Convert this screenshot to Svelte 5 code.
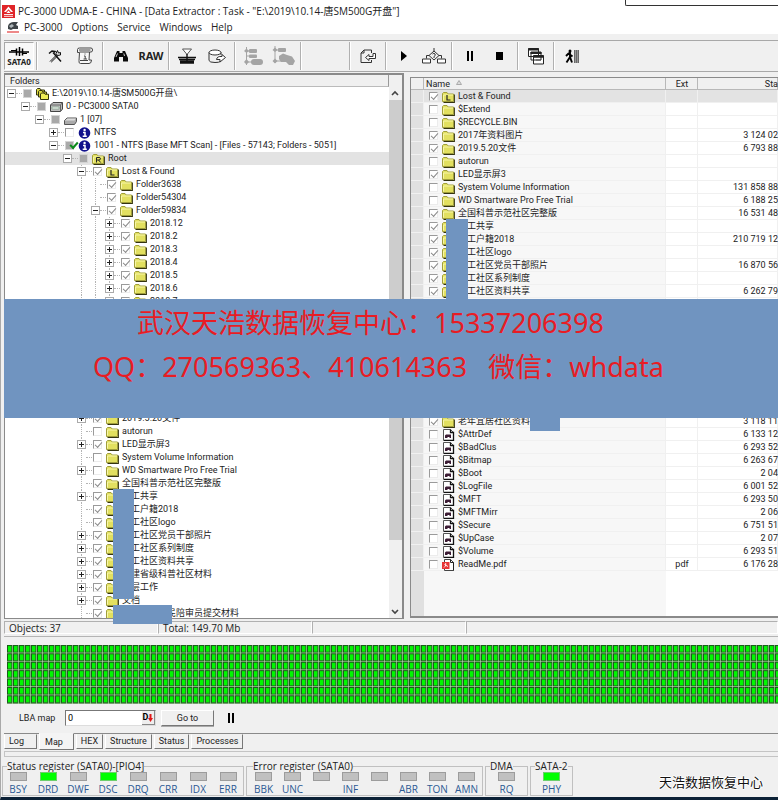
<script lang="ts">
  type Check = 'on' | 'off' | 'part';
  interface Node {
    level: number;
    label: string;
    check: Check;
    icon: string;
    exp?: '+' | '-';
    selected?: boolean;
    tick?: boolean;
  }
  interface Item {
    name: string;
    check?: Check;
    icon?: string;
    ext?: string;
    start?: string;
    selected?: boolean;
  }

  const menu = ['PC-3000', 'Options', 'Service', 'Windows', 'Help'];

  const folder = (level: number, label: string, exp?: '+' | '-', check: Check = 'on'): Node => ({
    level,
    label,
    check,
    icon: 'folder',
    exp,
  });

  const blank = (level: number): Node => ({ level, label: '', check: 'off', icon: '' });

  const tree: Node[] = [
    { level: 0, label: 'E:\\2019\\10.14-唐SM500G开盘\\', check: 'part', icon: 'stack', exp: '-' },
    { level: 1, label: '0 - PC3000 SATA0', check: 'part', icon: 'disk', exp: '-' },
    { level: 2, label: '1 [07]', check: 'part', icon: 'drive', exp: '-' },
    { level: 3, label: 'NTFS', check: 'off', icon: 'info', exp: '+' },
    { level: 3, label: '1001 - NTFS [Base MFT Scan] - [Files - 57143; Folders - 5051]', check: 'part', icon: 'info', exp: '-', tick: true },
    { level: 4, label: 'Root', check: 'part', icon: 'R', exp: '-', selected: true },
    { level: 5, label: 'Lost & Found', check: 'on', icon: 'L', exp: '-' },
    folder(6, 'Folder3638'),
    folder(6, 'Folder54304'),
    folder(6, 'Folder59834', '-'),
    folder(7, '2018.12', '+'),
    folder(7, '2018.2', '+'),
    folder(7, '2018.3', '+'),
    folder(7, '2018.4', '+'),
    folder(7, '2018.5', '+'),
    folder(7, '2018.6', '+'),
    folder(7, '2018.7', '+'),
    ...Array.from({ length: 8 }, () => blank(5)),
    folder(5, '2019.5.20文件', '+'),
    folder(5, 'autorun', undefined, 'off'),
    folder(5, 'LED显示屏3', '+'),
    folder(5, 'System Volume Information', undefined, 'off'),
    folder(5, 'WD Smartware Pro Free Trial', '+', 'off'),
    folder(5, '全国科普示范社区完整版'),
    folder(5, '\u3000工共享', '+'),
    folder(5, '\u3000工户籍2018'),
    folder(5, '\u3000工社区logo'),
    folder(5, '\u3000工社区党员干部照片', '+'),
    folder(5, '\u3000工社区系列制度', '+'),
    folder(5, '\u3000工社区资料共享', '+'),
    folder(5, '\u3000建省级科普社区材料', '+'),
    folder(5, '\u3000层工作', '+'),
    folder(5, '文档', '+'),
    folder(5, '\u3000\u3000\u3000\u3000\u3000民陪审员提交材料'),
  ];

  const file = (name: string, start: string): Item => ({ name, start, check: 'off', icon: 'sys' });

  const items: Item[] = [
    { name: 'Lost & Found', check: 'on', icon: 'L', selected: true },
    { name: '$Extend', check: 'off', icon: 'folder' },
    { name: '$RECYCLE.BIN', check: 'off', icon: 'folder' },
    { name: '2017年资料图片', check: 'on', icon: 'folder', start: '3 124 02' },
    { name: '2019.5.20文件', check: 'on', icon: 'folder', start: '6 793 88' },
    { name: 'autorun', check: 'off', icon: 'folder' },
    { name: 'LED显示屏3', check: 'on', icon: 'folder' },
    { name: 'System Volume Information', check: 'off', icon: 'folder', start: '131 858 88' },
    { name: 'WD Smartware Pro Free Trial', check: 'off', icon: 'folder', start: '6 188 25' },
    { name: '全国科普示范社区完整版', check: 'on', icon: 'folder', start: '16 531 48' },
    { name: '\u3000工共享', check: 'on', icon: 'folder' },
    { name: '\u3000工户籍2018', check: 'on', icon: 'folder', start: '210 719 12' },
    { name: '\u3000工社区logo', check: 'on', icon: 'folder' },
    { name: '\u3000工社区党员干部照片', check: 'on', icon: 'folder', start: '16 870 56' },
    { name: '\u3000工社区系列制度', check: 'on', icon: 'folder' },
    { name: '\u3000工社区资料共享', check: 'on', icon: 'folder', start: '6 262 79' },
    ...Array.from({ length: 9 }, () => ({ name: '' })),
    { name: '老年宜居社区资料', check: 'on', icon: 'folder', start: '3 118 11' },
    file('$AttrDef', '6 133 12'),
    file('$BadClus', '6 293 52'),
    file('$Bitmap', '6 263 67'),
    file('$Boot', '2 04'),
    file('$LogFile', '6 001 52'),
    file('$MFT', '6 293 50'),
    file('$MFTMirr', '2 06'),
    file('$Secure', '6 751 51'),
    file('$UpCase', '2 07'),
    file('$Volume', '6 293 51'),
    { name: 'ReadMe.pdf', check: 'off', icon: 'pdf', ext: 'pdf', start: '6 176 28' },
  ];

  const tabs = ['Log', 'Map', 'HEX', 'Structure', 'Status', 'Processes'];
  let activeTab = $state('Map');
  let lba = $state('0');

  const registers = [
    {
      title: 'Status register (SATA0)-[PIO4]',
      kind: 'state',
      bits: ['BSY', 'DRD', 'DWF', 'DSC', 'DRQ', 'CRR', 'IDX', 'ERR'],
    },
    { title: 'Error register (SATA0)', kind: 'error', bits: ['BBK', 'UNC', '', 'INF', '', 'ABR', 'TON', 'AMN'] },
    { title: 'DMA', kind: 'single', bits: ['RQ'] },
    { title: 'SATA-2', kind: 'single', bits: ['PHY'] },
  ];
  const lit = new Set(['DRD', 'DSC', 'PHY']);
</script>

{#snippet nodeIcon(kind: string)}
  <svg class="icon" viewBox="0 0 13 12" aria-hidden="true">
    {#if kind === 'folder' || kind === 'L' || kind === 'R'}
      <path d="M1.500 11.500H12.300V3.500" fill="none" stroke="#33330f" stroke-width="1.200" />
      <path d="M.5 10.500V2.500L1.500 1.500H5L6.200 3H11.500V10.500Z" fill="#e2e060" stroke="#a09e3c" />
      <path d="M1.500 9.500V4H11" fill="none" stroke="#f7f6a8" />
      {#if kind === 'L'}
        <path d="M5 4V9H8.500" fill="none" stroke="#222" stroke-width="1.200" />
      {:else if kind === 'R'}
        <path d="M4.500 9.500V4.500H7Q8.500 4.500 8.500 5.700T7 7H4.500M6.500 7L8.700 9.500" fill="none" stroke="#222" />
      {/if}
    {:else if kind === 'stack'}
      <path d="M.5 7V1.500L1.500.5H4L5 2H8.500V7Z" fill="#d8d640" stroke="#33330c" />
      <path d="M2.500 9V3.500L3.500 2.500H6L7 4H10.500V9Z" fill="#d8d640" stroke="#33330c" />
      <path d="M4.500 11.500V6L5.500 5H8L9 6.200H12.500V11.500Z" fill="#efed55" stroke="#33330c" />
    {:else if kind === 'disk'}
      <path d="M.5 4L3 1.500H12.500V8L10.500 10.500H.5Z" fill="#bdbdbd" stroke="#444" />
      <path d="M.5 4H10.500V10.500M10.500 4L12.500 1.500" fill="none" stroke="#666" />
      <path d="M2 6H9V8H2Z" fill="#eee" stroke="#6f9a7a" stroke-width=".6" />
    {:else if kind === 'drive'}
      <path d="M.5 6.500L3 4H12.500V7.500L10.500 10.500H.5Z" fill="#aaa" stroke="#555" />
      <path d="M1 6.500H10.500L12 4.500H3.200Z" fill="#ddd" />
    {:else if kind === 'info'}
      <circle cx="6.500" cy="6" r="5.800" fill="#11118c" />
      <path d="M5 5.500H7V9M4.700 9.300H8.800" fill="none" stroke="#fff" stroke-width="1.500" />
      <circle cx="6.600" cy="3" r="1.200" fill="#fff" />
    {:else if kind === 'sys'}
      <path d="M1.500.5H8.500L11.500 3.500V11.500H1.500Z" fill="#fff" stroke="#555" />
      <path d="M8.500.5V3.500H11.500V11.500H2" fill="none" stroke="#111" stroke-width="1.300" />
      <path d="M3 9V6.500L4 5.500H9V9H7.500V8H5.500V9Z" fill="#3c1c34" />
    {:else if kind === 'pdf'}
      <path d="M2.500.5H8.500L11.500 3.500V11.500H2.500Z" fill="#fff" stroke="#444" />
      <path d="M8.500.5V3.500H11.500V11.500" fill="none" stroke="#222" />
      <rect x="0" y="3" width="7.500" height="7" fill="#e63434" />
      <path d="M2 8.500C4 7 4 5 3.500 4M2.500 5.500L6 7.500" fill="none" stroke="#fff" stroke-width=".9" />
    {/if}
  </svg>
{/snippet}

<div class="window">
  <header class="title">
    <svg class="logo" viewBox="0 0 13 13" aria-hidden="true">
      <rect width="13" height="13" fill="#e02427" />
      <path d="M6.500 1.500L11 7H9L6.500 4.200L4 7H2Z" fill="#fff" />
      <path d="M6.500 5.500L8.500 8H4.500Z" fill="#fff" />
      <path d="M2 9.500H11M2 11.300H11" stroke="#fff" stroke-width=".9" />
    </svg>
    <h1>PC-3000 UDMA-E - CHINA - [Data Extractor : Task - "E:\2019\10.14-唐SM500G开盘"]</h1>
    <div class="popup-edge"></div>
  </header>

  <nav class="menu">
    <svg class="mdi" viewBox="0 0 12 12" aria-hidden="true">
      <path d="M1 5C2 2 4 1 7 1H11L9 4L11 5V8H6L4 9L1 8Z" fill="#3d4347" />
      <path d="M2 5L5 3L7 5L4 7Z" fill="#aeb6ba" />
      <path d="M0 11H12" stroke="#e23a3a" stroke-width="1.200" />
    </svg>
    {#each menu as entry}
      <button type="button">{entry}</button>
    {/each}
  </nav>

  <div class="toolbar">
    <button type="button" class="tool pressed" aria-label="SATA0">
      <svg width="22" height="10" viewBox="0 0 22 10" aria-hidden="true">
        <path d="M1 5H21M8.500 1.500V8.500M11.500 0V9M14.500 1.500V8.500" stroke="#000" stroke-width="1.500" fill="none" />
        <path d="M3 3.500H8M15 6.500H19" stroke="#000" />
      </svg>
      <span class="port">SATA0</span>
    </button>
    <i class="sep"></i>
    <button type="button" class="tool" aria-label="Utilities">
      <svg width="14" height="14" viewBox="0 0 14 14" aria-hidden="true">
        <path d="M2 12.500L9 5.500M3.200 13.200L10 6.500" stroke="#111" fill="none" />
        <path d="M1 4.500L4 2L7 2.500L5.500 4L13 12.500" fill="none" stroke="#111" stroke-width="1.500" />
        <path d="M9.500 6.500L8 4.500L9.500 1.500L10.500 4L12.500 3.500L12.500 6Z" fill="#ddd" stroke="#111" />
      </svg>
    </button>
    <button type="button" class="tool" aria-label="Script">
      <svg width="18" height="18" viewBox="0 0 18 18" aria-hidden="true">
        <path d="M3.500 5.500H1.500V2.500Q1.500 1 3.500 1H15Q16.500 1 16.500 3T15 5H13.500L13 13H15.500Q15.500 16.500 13 16.500H4.500Q2.500 16.500 3 13.500Z" fill="#f7f7f7" stroke="#444" />
        <path d="M3.500 5H13.500M3 3H14.500M4 13.500H12M9 6.500V7.500M8 9H9.200V12M7.500 12H11" stroke="#444" fill="none" />
      </svg>
    </button>
    <i class="sep"></i>
    <button type="button" class="tool" aria-label="Find">
      <svg width="14" height="12" viewBox="0 0 14 12" aria-hidden="true">
        <path d="M3 1H5.500V3H8.500V1H11L14 8V11.500H9V7H5V11.500H0V8Z" fill="#0b0b0b" />
        <path d="M2 7L3.500 3.500M9.800 3.500L10.500 6" stroke="#ccc" />
      </svg>
    </button>
    <button type="button" class="tool raw">RAW</button>
    <i class="sep"></i>
    <button type="button" class="tool" aria-label="Filter">
      <svg width="18" height="17" viewBox="0 0 18 17" aria-hidden="true">
        <path d="M4.500 1H13.500L9 6.500Z" fill="#fff" stroke="#555" />
        <path d="M9 6V15M0 9.500H18M1 11.500H17" stroke="#111" fill="none" stroke-width="1.400" />
        <path d="M2 14H16" stroke="#111" stroke-width="3.500" />
      </svg>
    </button>
    <button type="button" class="tool" aria-label="Extract">
      <svg width="18" height="15" viewBox="0 0 18 15" aria-hidden="true">
        <ellipse cx="7" cy="3.500" rx="6" ry="2.500" fill="#fff" stroke="#333" />
        <path d="M1 3.500V11.500Q1.500 13.500 7 13.500Q11 13.500 12.500 12.500M13 3.500V6" fill="none" stroke="#333" />
        <path d="M8.500 10.500H12V13L17.500 8.500L14 5.500V7.500Q9 7 8.500 10.500Z" fill="#fff" stroke="#333" />
      </svg>
    </button>
    <i class="sep"></i>
    <button type="button" class="tool" aria-label="Map files" disabled>
      <svg width="20" height="19" viewBox="0 0 20 19" aria-hidden="true">
        <path d="M3.500 0V18M3.500 4H8M3.500 9H8M3.500 15H10" stroke="#a4a4a4" fill="none" />
        <path d="M1 4L3.500 1.500L6 4L3.500 6ZM1 15L3.500 12L6 15L3.500 17.500Z" fill="#a4a4a4" />
        <rect x="6" y="2" width="8" height="4" rx="1" fill="#a4a4a4" />
        <rect x="6" y="7.500" width="8" height="3.500" rx="1" fill="#a4a4a4" />
        <rect x="8" y="12" width="12" height="6" rx="3" fill="#a4a4a4" />
      </svg>
    </button>
    <button type="button" class="tool" aria-label="Map folders" disabled>
      <svg width="23" height="20" viewBox="0 0 23 20" aria-hidden="true">
        <path d="M3 0V17M3 4H8M3 15H9" stroke="#a4a4a4" fill="none" />
        <path d="M.5 4L3 1.500L5.500 4L3 6ZM.5 15L3 12.500L5.500 15L3 17.500Z" fill="#a4a4a4" />
        <rect x="6" y="2" width="8" height="4" rx="1" fill="#a4a4a4" />
        <path d="M7 10L11 7.500L15 9L20 10.500L23 15L21 19H17L14 16L9 16L7 13Z" fill="#a4a4a4" />
      </svg>
    </button>
    <i class="sep"></i>
    <span class="space"></span>
    <i class="sep"></i>
    <button type="button" class="tool" aria-label="Export">
      <svg width="17" height="15" viewBox="0 0 17 15" aria-hidden="true">
        <path d="M11.500 4V1H4L1 4V13.500H11.500V11M4 1V4H1" fill="none" stroke="#333" />
        <path d="M5.500 8.500L9 5.500V7.500H13V4.500H15.500V9.500H9V11.500Z" fill="#fff" stroke="#333" />
      </svg>
    </button>
    <i class="sep"></i>
    <button type="button" class="tool" aria-label="Run">
      <svg width="6" height="10" viewBox="0 0 6 10" aria-hidden="true"><path d="M0 0L6 5L0 10Z" /></svg>
    </button>
    <button type="button" class="tool" aria-label="Condition">
      <svg width="24" height="17" viewBox="0 0 24 17" aria-hidden="true">
        <path d="M12 0V3M12 3L17 7.500L12 12L7 7.500ZM7 7.500H4.500V10.500M17 7.500H19.500V10.500" fill="none" stroke="#333" />
        <path d="M.5 11H8.500V15H.5ZM15.500 11H23.500V15H15.500Z" fill="#fff" stroke="#333" />
        <path d="M10.500 6Q12 4.500 13 6T12 8.500V10" fill="none" stroke="#333" />
      </svg>
    </button>
    <i class="sep"></i>
    <button type="button" class="tool" aria-label="Pause">
      <svg width="7" height="10" viewBox="0 0 7 10" aria-hidden="true"><path d="M0 0H2V10H0ZM4 0H6V10H4Z" /></svg>
    </button>
    <button type="button" class="tool" aria-label="Stop">
      <svg width="8" height="8" viewBox="0 0 8 8" aria-hidden="true"><path d="M0 0H7V8H0Z" /></svg>
    </button>
    <i class="sep"></i>
    <button type="button" class="tool" aria-label="Windows">
      <svg width="16" height="17" viewBox="0 0 16 17" aria-hidden="true">
        <path d="M.5.5H10.500V8.500H.5ZM3 4H13V12H3ZM5.500 7.500H15.500V16H5.500Z" fill="#fff" stroke="#222" />
        <path d="M0 1.500H11M2.500 5H13.500M5 8.800H16" stroke="#222" stroke-width="2" />
        <path d="M8 12H13" stroke="#555" />
      </svg>
    </button>
    <i class="sep"></i>
    <button type="button" class="tool" aria-label="Exit">
      <svg width="15" height="15" viewBox="0 0 15 15" aria-hidden="true">
        <rect x="9" y="1" width="5" height="13" fill="#999" />
        <path d="M9.500 1V14M11.500 1V14M13.500 1V14" stroke="#555" stroke-width=".7" />
        <circle cx="5" cy="2" r="1.500" />
        <path d="M5 3V8L7 13.500M5 8L1.500 13.500M1 7L3.500 4.500L7.500 7.500" fill="none" stroke="#000" stroke-width="1.900" />
      </svg>
    </button>
  </div>

  <main class="work">
    <section class="folders">
      <h2>Folders</h2>
      <div class="tree-wrap">
        <ul class="tree">
          {#each tree as node}
            <li class:selected={node.selected}>
              {#each { length: node.level } as _, i}
                <span class="guide" class:line={i >= 5}></span>
              {/each}
              <span class="guide own" class:line={node.level >= 5}>
                {#if node.exp}
                  <button type="button" class="exp" aria-label="Toggle {node.label}">
                    <svg width="7" height="7" viewBox="0 0 7 7" aria-hidden="true">
                      <path d={node.exp === '+' ? 'M1 3.5H6M3.5 1V6' : 'M1 3.5H6'} stroke="#222" />
                    </svg>
                  </button>
                {/if}
              </span>
              {#if node.icon}
                <label>
                  <input type="checkbox" class={node.check} class:tick={node.tick} checked={node.check === 'on'} />
                  {@render nodeIcon(node.icon)}
                  <span>{node.label}</span>
                </label>
              {/if}
            </li>
          {/each}
        </ul>
        <div class="scroll" aria-hidden="true">
          <svg width="12" height="13" viewBox="0 0 12 13"><path d="M3 8L6 5L9 8" fill="none" stroke="#444" stroke-width="1.600" /></svg>
          <span class="thumb"></span>
          <svg width="12" height="13" viewBox="0 0 12 13"><path d="M3 5L6 8L9 5" fill="none" stroke="#444" stroke-width="1.600" /></svg>
        </div>
      </div>
      <i class="mask tall"></i>
      <i class="mask wide"></i>
    </section>

    <section class="files">
      <table>
        <colgroup><col class="c-mark" /><col class="c-name" /><col class="c-ext" /><col /></colgroup>
        <thead>
          <tr>
            <th></th>
            <th>Name <svg class="sort" width="6" height="5" viewBox="0 0 6 5" aria-hidden="true"><path d="M3 .5L5.500 4.500H.5Z" fill="#ddd" stroke="#aaa" /></svg></th>
            <th class="mid">Ext</th>
            <th class="num">Sta</th>
          </tr>
        </thead>
        <tbody>
          {#each items as item}
            <tr class:selected={item.selected}>
              <td></td>
              <td class="name">
                {#if item.icon}
                  <label>
                    <input type="checkbox" class={item.check} checked={item.check === 'on'} />
                    {@render nodeIcon(item.icon)}
                    <span>{item.name}</span>
                  </label>
                {/if}
              </td>
              <td class="mid">{item.ext ?? ''}</td>
              <td class="num">{item.start ?? ''}</td>
            </tr>
          {/each}
        </tbody>
      </table>
      <i class="mask names"></i>
      <i class="mask tail"></i>
    </section>

    <div class="banner">
      <p>武汉天浩数据恢复中心：15337206398</p>
      <p>QQ：270569363、410614363 &nbsp; 微信：whdata</p>
    </div>
  </main>

  <div class="status">
    <span>Objects: 37</span>
    <span>Total: 149.70 Mb</span>
    <span></span>
    <span></span>
  </div>

  <section class="map">
    <svg class="cells" aria-label="LBA map">
      <defs>
        <pattern id="cell" width="6" height="8.4" patternUnits="userSpaceOnUse">
          <rect width="6" height="8.4" fill="#c4dcbc" />
          <rect x="0.5" y="0.5" width="4.4" height="6.8" fill="#00f800" stroke="#1a5c1a" />
        </pattern>
      </defs>
      <rect width="100%" height="59" fill="url(#cell)" />
    </svg>
    <div class="goto">
      <label for="lba">LBA map</label>
      <div class="field">
        <input id="lba" type="text" bind:value={lba} />
        <button type="button" class="radix" aria-label="Decimal">
          <b>D</b>
          <svg width="5" height="8" viewBox="0 0 5 8" aria-hidden="true"><path d="M1.500 0H3.500V4H5L2.500 8L0 4H1.500Z" fill="#e01818" /></svg>
        </button>
      </div>
      <button type="button" class="go">Go to</button>
      <button type="button" class="hold" aria-label="Pause map">
        <svg width="7" height="10" viewBox="0 0 7 10" aria-hidden="true"><path d="M0 0H2V10H0ZM4 0H6V10H4Z" /></svg>
      </button>
    </div>
  </section>

  <div class="tabs" role="tablist">
    {#each tabs as tab}
      <button type="button" role="tab" aria-selected={tab === activeTab} class:active={tab === activeTab} onclick={() => (activeTab = tab)}>
        {tab}
      </button>
    {/each}
  </div>
  <div class="rule"></div>

  <footer class="registers">
    {#each registers as reg}
      <fieldset class={reg.kind}>
        <legend>{reg.title}</legend>
        {#each reg.bits as bit}
          <div class="bit">
            <i class="led" class:lit={lit.has(bit)}></i>
            <span>{bit}</span>
          </div>
        {/each}
      </fieldset>
    {/each}
    <p class="sign">天浩数据恢复中心</p>
  </footer>
</div>

<style>
  :global(body) {
    background: #f0f0f0;
  }

  * {
    box-sizing: border-box;
  }

  .window {
    display: flex;
    flex-direction: column;
    height: 100vh;
    padding-left: 3px;
    border-left: 1px solid #a9a9a9;
    border-bottom: 3px solid #0c2136;
    background: #f0f0f0;
    color: #222;
    font: 9px/13px Roboto, 'Noto Sans CJK SC', sans-serif;
    overflow: hidden;
  }

  button {
    margin: 0;
    padding: 0;
    border: 0;
    background: none;
    color: inherit;
    font: inherit;
  }

  h1,
  h2,
  p,
  ul {
    margin: 0;
    padding: 0;
    font-weight: normal;
  }

  .title,
  .menu {
    display: flex;
    align-items: center;
    margin-left: -3px;
    background: #fff;
    font: 10px/14px 'Open Sans', 'Noto Sans CJK SC', sans-serif;
  }

  .title {
    position: relative;
    height: 20px;
    padding: 2px 0 0 1px;
    gap: 3px;
  }

  h1 {
    font-size: 10px;
    white-space: nowrap;
  }

  .logo {
    width: 13px;
    height: 13px;
  }

  .popup-edge {
    position: absolute;
    top: 0;
    left: 624px;
    right: 0;
    height: 6px;
    border-left: 1px solid #333;
    border-bottom: 1px solid #333;
    border-bottom-left-radius: 2px;
  }

  .menu {
    height: 14px;
    padding-left: 6px;
    gap: 9px;
  }

  .mdi {
    width: 12px;
    height: 12px;
    margin-right: -4px;
  }

  .toolbar {
    display: flex;
    align-items: center;
    height: 32px;
    margin-top: 6px;
    border-top: 1px solid #a8a8a8;
    border-bottom: 1px solid #a8a8a8;
  }

  .tool {
    display: flex;
    flex: none;
    flex-direction: column;
    align-items: center;
    justify-content: center;
    width: 30px;
    height: 28px;
  }

  .pressed {
    border: 1px solid;
    border-color: #a8a8a8 #fff #fff #a8a8a8;
    background: #f8f8f8;
  }

  .port {
    font: bold 8px/9px 'Noto Sans', sans-serif;
  }

  .raw {
    font: bold 11px/14px 'Noto Sans', sans-serif;
  }

  .sep {
    flex: none;
    width: 6px;
    height: 28px;
    background: linear-gradient(90deg, transparent 2px, #b0b0b0 2px, #b0b0b0 3px, #fff 3px, #fff 4px, transparent 4px);
  }

  .space {
    width: 43px;
  }

  .work {
    position: relative;
    display: flex;
    flex: 1;
    gap: 6px;
    min-height: 0;
    padding-top: 1px;
  }

  .folders {
    position: relative;
    display: flex;
    flex: 0 0 400px;
    flex-direction: column;
    border: 1px solid #8a8a8a;
    border-width: 2px 2px 1px 1px;
  }

  .folders h2 {
    height: 12px;
    padding-left: 5px;
    width: 384px;
    border-right: 1px solid #999;
    border-bottom: 1px solid #bbb;
    font-size: 9px;
    line-height: 12px;
  }

  .tree-wrap {
    display: flex;
    flex: 1;
    min-height: 0;
    background: #fff;
  }

  .tree {
    flex: 1;
    list-style: none;
    overflow: hidden;
  }

  .tree li {
    display: flex;
    align-items: center;
    height: 13px;
    white-space: nowrap;
  }

  .selected {
    background: #e3e3e3;
  }

  .guide {
    position: relative;
    flex: none;
    width: 14px;
    height: 13px;
    background: repeating-linear-gradient(#b4b4b4 0 1px, transparent 1px 2px) 6px 0 / 0 13px no-repeat;
  }

  .guide.line {
    background-size: 1px 13px;
  }

  .own {
    display: flex;
    align-items: center;
    justify-content: center;
    width: 17px;
    padding-right: 4px;
  }

  .own::after {
    position: absolute;
    left: 11px;
    top: 6px;
    width: 6px;
    border-top: 1px dotted #b4b4b4;
    content: '';
  }

  .exp {
    position: relative;
    width: 9px;
    height: 9px;
    border: 1px solid #aaa;
    background: #fff;
  }

  .exp svg {
    display: block;
  }

  label {
    display: flex;
    align-items: center;
  }

  label span {
    height: 13px;
    line-height: 13px;
  }

  input[type='checkbox'] {
    flex: none;
    width: 9px;
    height: 9px;
    margin: 0 4px 0 1px;
    appearance: none;
    border: 1px solid;
    border-color: #9a9a9a #ececec #ececec #9a9a9a;
    background: #fff;
  }

  input[type='checkbox'].part {
    background: #a9a9a9;
    border-color: #d4d4d4;
  }

  input.on::before,
  input.tick::before {
    display: block;
    width: 6px;
    height: 3px;
    border: solid #8a8a8a;
    border-width: 0 0 1px 1px;
    transform: translate(1px, 1px) rotate(-48deg);
    content: '';
  }

  input.tick::before {
    border-color: #0c8a1c;
    border-width: 0 0 2px 2px;
    transform: translate(4px, 0) rotate(-48deg);
  }

  .icon {
    flex: none;
    width: 13px;
    height: 12px;
    margin-right: 3px;
  }

  .scroll {
    display: flex;
    flex: 0 0 13px;
    flex-direction: column;
    background: #f0f0f0;
  }

  .thumb {
    flex: 0 1 440px;
    background: #cdcdcd;
  }

  .scroll svg:last-child {
    margin-top: auto;
  }

  .mask {
    position: absolute;
    background: #7094c0;
  }

  .tall {
    left: 108px;
    top: 414px;
    width: 21px;
    height: 110px;
  }

  .wide {
    left: 108px;
    top: 530px;
    width: 59px;
    height: 19px;
  }

  .names {
    left: 35px;
    top: 141px;
    width: 22px;
    height: 80px;
  }

  .tail {
    left: 119px;
    top: 338px;
    width: 30px;
    height: 15px;
  }

  .files {
    position: relative;
    flex: 1;
    min-width: 0;
    margin: 4px 0 1px;
    border: solid #8a8a8a;
    border-width: 1px 0 2px 1px;
    background: linear-gradient(90deg, #e0e0e0 13px, #f7f7f7 13px, #f7f7f7 255px, #fff 255px);
  }

  table {
    width: 100%;
    border-collapse: collapse;
    table-layout: fixed;
  }

  .c-mark {
    width: 13px;
  }

  .c-name {
    width: 242px;
  }

  .c-ext {
    width: 32px;
  }

  th {
    height: 12px;
    padding: 0 0 0 2px;
    background: #f0f0f0;
    box-shadow: inset -1px -1px #b8b8b8;
    font-weight: normal;
    line-height: 12px;
    text-align: left;
  }

  .sort {
    margin: 0 0 2px 4px;
  }

  td {
    height: 13px;
    padding: 0;
    box-shadow: inset -1px -1px #f0f0f0;
    line-height: 13px;
    white-space: nowrap;
  }

  .name label {
    height: 13px;
    padding-left: 4px;
  }

  .mid {
    padding: 0;
    text-align: center;
  }

  .num {
    text-align: right;
  }

  .banner {
    position: absolute;
    z-index: 1;
    top: 227px;
    left: 0;
    right: 0;
    height: 119px;
    padding-top: 2px;
    background: #7094c0;
    color: #e81c24;
    font: 27px/44px 'Noto Sans', 'Noto Sans CJK SC', sans-serif;
    white-space: nowrap;
  }

  .banner p {
    padding-left: 89px;
  }

  .banner p:first-child {
    padding-left: 133px;
  }

  .status {
    display: flex;
    height: 18px;
    padding: 2px 0;
    border-bottom: 1px solid #b4b4b4;
    font: 10px/12px 'Open Sans', sans-serif;
  }

  .status span {
    flex: 0 0 154px;
    padding-left: 4px;
    border: 1px solid;
    border-color: #b0b0b0 #fff #fff #b0b0b0;
  }

  .status span:last-child {
    flex: 1;
  }

  .map {
    padding: 8px 0 7px 3px;
    border-bottom: 1px solid #8a8a8a;
  }

  .cells {
    display: block;
    width: 100%;
    height: 59px;
  }

  .goto {
    display: flex;
    align-items: center;
    margin-top: 6px;
    padding-left: 12px;
    height: 16px;
  }

  .goto > label {
    width: 46px;
  }

  .field {
    display: flex;
    width: 91px;
    height: 16px;
    border: 1px solid;
    border-color: #777 #ddd #ddd #777;
    background: #fff;
  }

  .field input {
    flex: 1;
    min-width: 0;
    padding: 0 0 0 2px;
    border: 0;
    background: none;
    font: inherit;
  }

  .radix {
    display: flex;
    align-items: center;
    justify-content: center;
    width: 13px;
    background: #eee;
    border-right: 1px solid #888;
    border-bottom: 1px solid #888;
    color: #000;
  }

  .go {
    width: 53px;
    height: 16px;
    margin: 0 14px 0 5px;
    border: 1px solid;
    border-color: #fff #777 #777 #fff;
    box-shadow: 0 1px #aaa;
  }

  .hold svg {
    display: block;
  }

  .tabs {
    display: flex;
    align-items: flex-start;
    height: 17px;
    gap: 2px;
  }

  .tabs button {
    height: 15px;
    padding: 0 4px;
    border: 1px solid;
    border-color: transparent #777 #777 #fff;
  }

  .tabs button:first-child {
    padding-right: 12px;
  }

  .tabs button.active {
    height: 17px;
    padding: 2px 10px 0 5px;
    margin-top: -1px;
    background: #f4f4f4;
  }

  .rule {
    height: 6px;
    border: 1px solid #c4c4c4;
    border-width: 1px 0 1px 1px;
  }

  .registers {
    display: flex;
    gap: 2px;
    margin-left: -2px;
    padding: 3px 0 1px;
    font: 10px/12px 'Open Sans', sans-serif;
  }

  fieldset {
    display: flex;
    height: 36px;
    min-width: 0;
    margin: 0;
    padding: 0;
    border: 1px solid #c0c0c0;
  }

  legend {
    height: 12px;
    margin-left: 4px;
    padding: 0;
    white-space: nowrap;
  }

  .bit {
    display: flex;
    flex-direction: column;
    align-items: center;
    width: 30px;
    gap: 2px;
    color: #2c5a94;
  }

  .error {
    padding: 0 1px 0 2px;
  }

  .error .bit {
    width: 29px;
  }

  .single .bit {
    width: 41px;
  }

  .led {
    width: 17px;
    height: 9px;
    border: 1px solid #9c9c9c;
    background: #c0c0c0;
  }

  .led.lit {
    border-color: #6ccf6c;
    background: #00ff00;
  }

  .sign {
    margin: 12px 15px 0 auto;
    color: #111;
    font: 13px/20px 'Noto Sans CJK SC', sans-serif;
    text-shadow: 1px 0 #fff, -1px 0 #fff, 0 1px #fff, 0 -1px #fff;
  }
</style>
